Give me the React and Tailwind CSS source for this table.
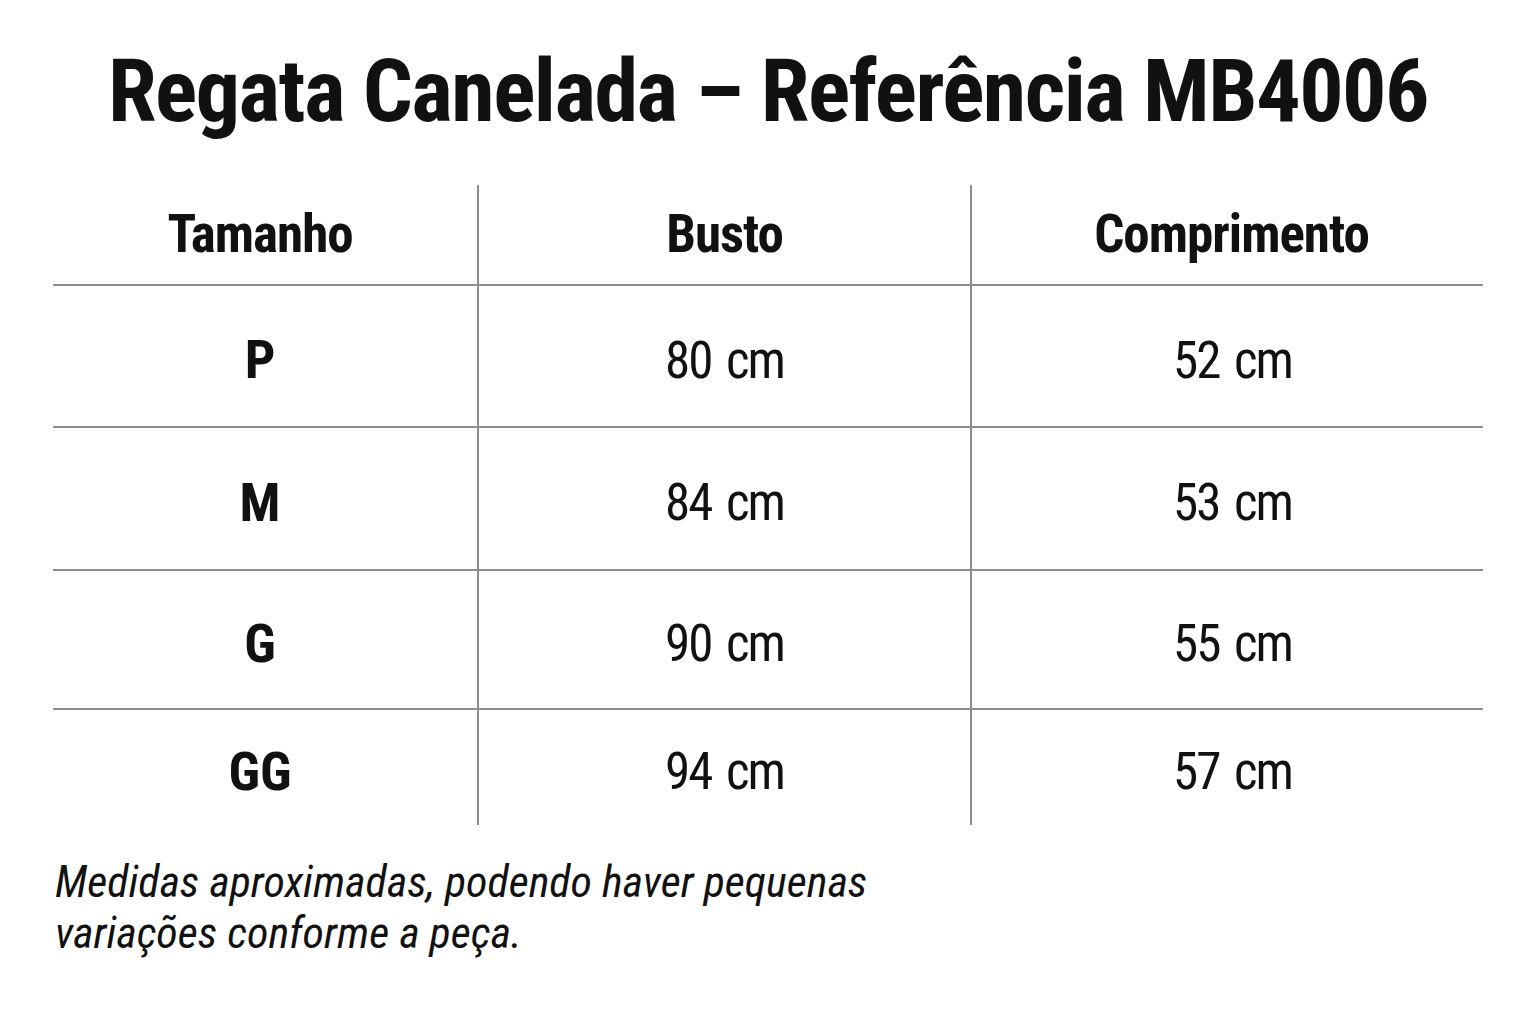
const rows = [
  { size: "P", busto: "80 cm", comp: "52 cm", h: "h-[142px]", line: true },
  { size: "M", busto: "84 cm", comp: "53 cm", h: "h-[143px]", line: true },
  { size: "G", busto: "90 cm", comp: "55 cm", h: "h-[139px]", line: true },
  { size: "GG", busto: "94 cm", comp: "57 cm", h: "h-[115px]", line: false },
];

export default function App() {
  return (
    <div className="w-[1536px] h-[1024px] bg-white text-[#111] font-['Roboto_Condensed',_'Roboto',_sans-serif]">
      <h1 className="pt-[47px] text-center font-bold text-[88px] leading-none tracking-[-1.5px] whitespace-nowrap">
        Regata Canelada – Referência MB4006
      </h1>
      <div className="mt-[50px] ml-[53px] w-[1430px] flex flex-col">
        <div className="flex h-[101px] border-b-2 border-[#8c8c8c]">
          <div className="w-[426px] flex items-center justify-center border-r-2 border-[#8c8c8c] font-bold text-[53px] leading-none tracking-[-1px] pr-[10px]">
            Tamanho
          </div>
          <div className="w-[493px] flex items-center justify-center border-r-2 border-[#8c8c8c] font-bold text-[53px] leading-none tracking-[-1px]">
            Busto
          </div>
          <div className="flex-1 flex items-center justify-center font-bold text-[53px] leading-none tracking-[-1px] pl-[8px]">
            Comprimento
          </div>
        </div>
        {rows.map((r) => (
          <div key={r.size} className={`flex ${r.h} ${r.line ? "border-b-2 border-[#8c8c8c]" : ""}`}>
            <div className="w-[426px] flex items-center justify-center border-r-2 border-[#8c8c8c] font-bold text-[54px] leading-none pt-[8px] pr-[10px]">
              {r.size}
            </div>
            <div className="w-[493px] flex items-center justify-center border-r-2 border-[#8c8c8c] text-[51px] leading-none tracking-[-2px] [word-spacing:5px] pt-[8px]">
              {r.busto}
            </div>
            <div className="flex-1 flex items-center justify-center text-[51px] leading-none tracking-[-2px] [word-spacing:5px] pt-[8px] pl-[10px]">
              {r.comp}
            </div>
          </div>
        ))}
      </div>
      <p className="mt-[32px] ml-[55px] italic text-[44px] leading-[51px]">
        Medidas aproximadas, podendo haver pequenas
        <br />
        variações conforme a peça.
      </p>
    </div>
  );
}
